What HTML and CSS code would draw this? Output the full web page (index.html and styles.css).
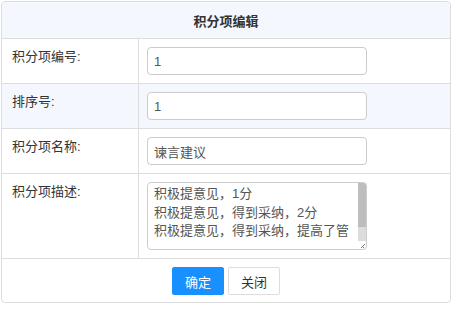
FILE: index.html
```html
<!DOCTYPE html>
<html lang="zh-CN">
<head>
  <meta charset="UTF-8">
  <title>积分项编辑</title>
  <link rel="stylesheet" href="styles.css">
</head>
<body>
  <div class="panel">
    <div class="panel-title">积分项编辑</div>

    <div class="form-grid">
      <div class="form-label">积分项编号:</div>
      <div class="form-field"><input type="text" class="form-input" value="1"></div>

      <div class="form-label alt">排序号:</div>
      <div class="form-field alt"><input type="text" class="form-input" value="1"></div>

      <div class="form-label">积分项名称:</div>
      <div class="form-field"><input type="text" class="form-input" value="谏言建议"></div>

      <div class="form-label">积分项描述:</div>
      <div class="form-field">
        <div class="textarea-box">
          <textarea class="form-textarea">积极提意见，1分
积极提意见，得到采纳，2分
积极提意见，得到采纳，提高了管理效率，3分</textarea>
        </div>
      </div>
    </div>

    <div class="panel-actions">
      <button type="button" class="btn btn-primary">确定</button>
      <button type="button" class="btn btn-default">关闭</button>
    </div>
  </div>
</body>
</html>
```

FILE: styles.css
```css
* {
  margin: 0;
  padding: 0;
  box-sizing: border-box;
  font-family: "Liberation Sans", "Noto Sans CJK SC", sans-serif;
}

body {
  background: #fff;
  color: #333;
  font-size: 13px;
  padding: 1px;
}

.panel {
  width: 450px;
  border: 1px solid #ddd;
  border-radius: 4px;
  overflow: hidden;
}

.panel-title {
  height: 37px;
  display: flex;
  align-items: center;
  justify-content: center;
  background-color: #f4f8fe;
  border-bottom: 1px solid #ddd;
  font-weight: 700;
  color: #333;
}

.form-grid {
  display: grid;
  grid-template-columns: 137px 1fr;
}

.form-label {
  border-right: 1px solid #ddd;
  border-bottom: 1px solid #ddd;
  padding: 8px 10px;
  line-height: 20px;
  color: #333;
}

.form-field {
  border-bottom: 1px solid #ddd;
  padding: 8px;
}

.alt {
  background-color: #f4f8fe;
}

.form-input {
  display: block;
  width: 220px;
  height: 28px;
  padding: 0 6px;
  border: 1px solid #ccc;
  border-radius: 4px;
  background: #fff;
  color: #555;
  font-size: 13px;
  outline: none;
}

/* box holds the border and a painted scrollbar + resize grip */
.textarea-box {
  width: 220px;
  height: 68px;
  padding: 0 14px 0 6px;
  border: 1px solid #ccc;
  border-radius: 4px;
  background:
    linear-gradient(135deg, transparent 55%, #777 55%, #777 65%, transparent 65%, transparent 80%, #777 80%, #777 90%, transparent 90%) right 1px bottom 1px / 5px 5px no-repeat,
    linear-gradient(#bdbdbd, #bdbdbd) right 0 top 0 / 8px 44px no-repeat,
    linear-gradient(#dcdcdc, #dcdcdc) right 0 top 0 / 8px 58px no-repeat,
    #fff;
}

.form-textarea {
  display: block;
  width: 100%;
  height: 60px;
  padding-top: 2px;
  border: none;
  background: transparent;
  color: #555;
  font-size: 13px;
  line-height: 18.5px;
  overflow: hidden;
  resize: none;
  outline: none;
}

.panel-actions {
  height: 43px;
  display: flex;
  justify-content: center;
  align-items: flex-start;
  gap: 4px;
  padding-top: 8px;
}

.btn {
  height: 28px;
  width: 52px;
  border-radius: 2px;
  font-size: 13px;
  cursor: pointer;
}

.btn-primary {
  background-color: #1890ff;
  border: 1px solid #1890ff;
  color: #fff;
}

.btn-default {
  background-color: #fff;
  border: 1px solid #ddd;
  color: #333;
}
```
